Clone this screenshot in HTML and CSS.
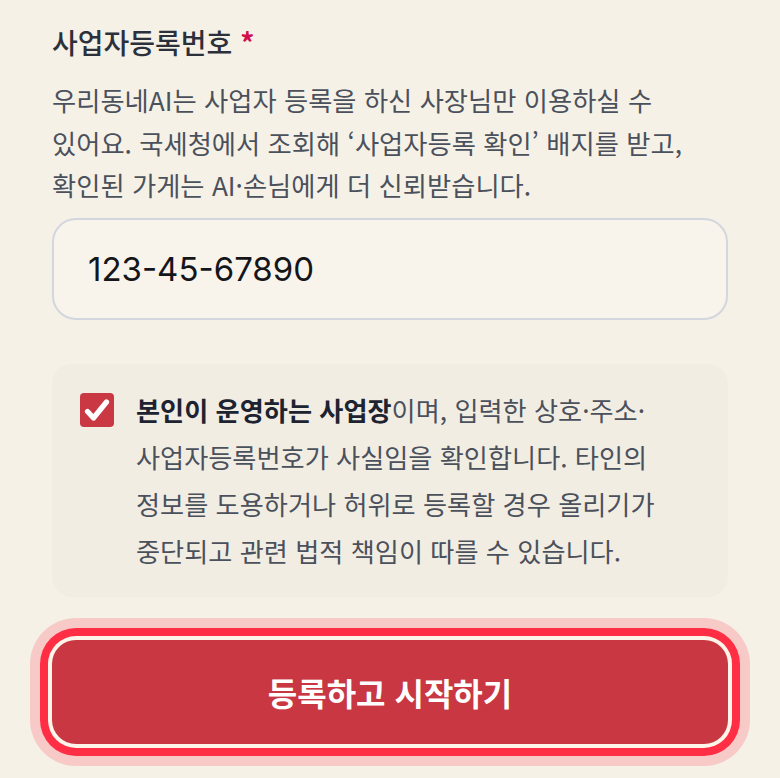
FILE: index.html
```html
<!DOCTYPE html>
<html lang="ko">
<head>
<meta charset="utf-8">
<title>사업자등록번호</title>
<link rel="stylesheet" href="styles.css">
</head>
<body>
<main class="page">
  <label class="label" for="bizno">사업자등록번호 <span class="req">*</span></label>
  <p class="desc">우리동네AI는 사업자 등록을 하신 사장님만 이용하실 수<br>있어요. 국세청에서 조회해 ‘사업자등록 확인’ 배지를 받고,<br>확인된 가게는 AI·손님에게 더 신뢰받습니다.</p>
  <div class="input"><span class="input-value">123-45-67890</span></div>
  <div class="agree">
    <span class="check">
      <svg viewBox="0 0 34 34" width="34" height="34" aria-hidden="true"><path d="M7.5 18.5 L13.5 25 L26.5 9" fill="none" stroke="#fff" stroke-width="5.2" stroke-linecap="round" stroke-linejoin="round"/></svg>
    </span>
    <p class="agree-text"><strong>본인이 운영하는 사업장</strong>이며, 입력한 상호·주소·<br>사업자등록번호가 사실임을 확인합니다. 타인의<br>정보를 도용하거나 허위로 등록할 경우 올리기가<br>중단되고 관련 법적 책임이 따를 수 있습니다.</p>
  </div>
  <button class="submit" type="button">등록하고 시작하기</button>
</main>
</body>
</html>
```
FILE: styles.css
```css
html, body {
  margin: 0;
  padding: 0;
  background: #f6f1e7;
}
body {
  font-family: "Noto Sans CJK KR", "Noto Sans", sans-serif;
}
.page {
  padding: 24px 52px 60px;
  display: flex;
  flex-direction: column;
}
.label {
  font-size: 28px;
  line-height: 36px;
  font-weight: 500;
  color: #2b303b;
}
.req {
  color: #d0104c;
  font-weight: 700;
}
.desc {
  margin: 19px 0 0;
  font-size: 26.3px;
  line-height: 42.5px;
  color: #4b515c;
}
.input {
  margin-top: 11px;
  height: 98px;
  border: 2px solid #d3d6de;
  border-radius: 24px;
  background: #f8f4ec;
  display: flex;
  align-items: center;
  padding-left: 34px;
}
.input-value {
  font-family: Inter, "Liberation Sans", sans-serif;
  font-size: 33px;
  color: #14161a;
}
.agree {
  margin-top: 44px;
  background: #f2ede3;
  border-radius: 20px;
  padding: 23px 28px 22px;
  display: flex;
  gap: 22px;
  align-items: flex-start;
}
.check {
  flex: none;
  width: 34px;
  height: 34px;
  margin-top: 6px;
  border-radius: 4px;
  background: #c93843;
  display: flex;
}
.agree-text {
  margin: 0;
  font-size: 26.2px;
  line-height: 47px;
  color: #4b515c;
}
.agree-text strong {
  color: #1d2330;
  font-weight: 700;
}
.submit {
  margin-top: 43px;
  height: 104px;
  border: 0;
  border-radius: 24px;
  background: #c83742;
  color: #fff;
  font-family: "Noto Sans CJK KR", "Noto Sans", sans-serif;
  font-size: 32px;
  font-weight: 700;
  box-shadow: 0 0 0 4px #fdf5ea, 0 0 0 12px #ff2e45, 0 0 0 22px #f8cac7;
}
```
